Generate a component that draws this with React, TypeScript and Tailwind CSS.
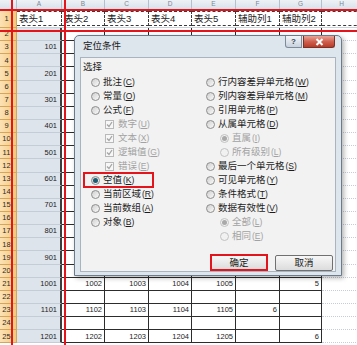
import clsx from 'clsx'

type Col = { key: string; width: string }

type Opt = {
    label: string
    hotkey: string
    kind: 'radio' | 'check'
    sub?: boolean
    checked?: boolean
    disabled?: boolean
}

const COLS: Col[] = [
    { key: 'A', width: 'w-[45px]' },
    { key: 'B', width: 'w-[43px]' },
    { key: 'C', width: 'w-[44px]' },
    { key: 'D', width: 'w-[43px]' },
    { key: 'E', width: 'w-[44px]' },
    { key: 'F', width: 'w-[44px]' },
    { key: 'G', width: 'w-[42px]' },
    { key: 'H', width: 'w-[40px]' },
]

const HEADINGS = ['表头1', '表头2', '表头3', '表头4', '表头5', '辅助列1', '辅助列2', '']

const ROWS = Array.from({ length: 24 }, (_, i) => i + 2)

const LEFT: Opt[] = [
    { label: '批注', hotkey: 'C', kind: 'radio' },
    { label: '常量', hotkey: 'O', kind: 'radio' },
    { label: '公式', hotkey: 'F', kind: 'radio' },
    { label: '数字', hotkey: 'U', kind: 'check', sub: true, checked: true, disabled: true },
    { label: '文本', hotkey: 'X', kind: 'check', sub: true, checked: true, disabled: true },
    { label: '逻辑值', hotkey: 'G', kind: 'check', sub: true, checked: true, disabled: true },
    { label: '错误', hotkey: 'E', kind: 'check', sub: true, checked: true, disabled: true },
    { label: '空值', hotkey: 'K', kind: 'radio', checked: true },
    { label: '当前区域', hotkey: 'R', kind: 'radio' },
    { label: '当前数组', hotkey: 'A', kind: 'radio' },
    { label: '对象', hotkey: 'B', kind: 'radio' },
]

const RIGHT: Opt[] = [
    { label: '行内容差异单元格', hotkey: 'W', kind: 'radio' },
    { label: '列内容差异单元格', hotkey: 'M', kind: 'radio' },
    { label: '引用单元格', hotkey: 'P', kind: 'radio' },
    { label: '从属单元格', hotkey: 'D', kind: 'radio' },
    { label: '直属', hotkey: 'I', kind: 'radio', sub: true, checked: true, disabled: true },
    { label: '所有级别', hotkey: 'L', kind: 'radio', sub: true, disabled: true },
    { label: '最后一个单元格', hotkey: 'S', kind: 'radio' },
    { label: '可见单元格', hotkey: 'Y', kind: 'radio' },
    { label: '条件格式', hotkey: 'T', kind: 'radio' },
    { label: '数据有效性', hotkey: 'V', kind: 'radio' },
    { label: '全部', hotkey: 'L', kind: 'radio', sub: true, checked: true, disabled: true },
    { label: '相同', hotkey: 'E', kind: 'radio', sub: true, disabled: true },
]

// column A counts 101, 201 ... on odd rows; B..G only show below the dialog
function cellValue(row: number, col: number): string {
    if (row % 2 === 0) return ''
    const base = ((row - 1) / 2) * 100
    if (col === 0) return String(base + 1)
    if (row < 21) return ''
    if (col <= 4) return String(base + col + 1)
    if (col === 5) return row === 23 ? '6' : ''
    if (col === 6) return row === 21 ? '5' : row === 25 ? '6' : ''
    return ''
}

function RowHead({ n, tall }: { n: number; tall?: boolean }) {
    return (
        <div
            className={clsx(
                'flex w-[17px] shrink-0 items-center justify-center border-b border-r border-[#d6a55c] bg-linear-to-r from-[#fbe2b6] to-[#f6c979] pr-[3px] text-[7.5px] leading-none text-[#2b2b2b]',
                tall ? 'h-[18px]' : 'h-full'
            )}
        >
            {n}
        </div>
    )
}

function Radio({ checked, disabled }: { checked?: boolean; disabled?: boolean }) {
    return (
        <span
            className={clsx(
                'flex h-[9px] w-[9px] shrink-0 items-center justify-center rounded-full border',
                disabled
                    ? 'border-[#c2c2c2] bg-[#f1f1f1]'
                    : 'border-[#8d8d8d] bg-linear-to-br from-[#cfcfcf] to-[#fbfbfb]'
            )}
        >
            {checked ? (
                <span
                    className={clsx(
                        'h-[5px] w-[5px] rounded-full',
                        disabled ? 'bg-[#a9a9a9]' : 'bg-[#1d5d73]'
                    )}
                />
            ) : null}
        </span>
    )
}

function Check() {
    return (
        <span className="flex h-[9px] w-[9px] shrink-0 items-center justify-center border border-[#b9b9b9] bg-[#f7f7f7]">
            <svg width="7" height="7" viewBox="0 0 7 7">
                <polyline points="1,3.5 3,5.5 6,1" fill="none" stroke="#a5a5a5" strokeWidth="1.3" />
            </svg>
        </span>
    )
}

function Option({ opt }: { opt: Opt }) {
    return (
        <div className={clsx('flex h-[14px] items-center', opt.sub && 'pl-[14px]')}>
            {opt.kind === 'radio' ? (
                <Radio checked={opt.checked} disabled={opt.disabled} />
            ) : (
                <Check />
            )}
            <span
                className={clsx(
                    'whitespace-nowrap text-[9.5px] leading-none',
                    opt.kind === 'check' ? 'ml-[4px]' : 'ml-[3px]',
                    opt.disabled ? 'text-[#a2a2a2]' : 'text-[#1c1c1c]'
                )}
            >
                {opt.label}
                <span className="ml-[1px] text-[8.5px]">
                    (<u>{opt.hotkey}</u>)
                </span>
            </span>
        </div>
    )
}

function Dialog() {
    return (
        <div className="absolute left-[74px] top-[35px] flex h-[241px] w-[268px] flex-col rounded-t-[5px] border border-[#6b7b8c] bg-[#dde5ed] px-[5px] pb-[3px] shadow-[2px_2px_5px_rgba(0,0,0,0.3)]">
            <div className="flex h-[21px] shrink-0 items-start">
                <span className="mt-[5px] pl-[3px] text-[9.5px] leading-none text-[#1a1a1a]">
                    定位条件
                </span>
                <div className="ml-auto mr-[1px] flex gap-[1px]">
                    <div className="flex h-[12px] w-[17px] items-center justify-center rounded-bl-[3px] border border-t-0 border-[#7c8a9a] bg-linear-to-b from-[#f3f6f9] to-[#c8d2dd] text-[8px] font-bold leading-none text-[#34414f]">
                        ?
                    </div>
                    <div className="flex h-[12px] w-[32px] items-center justify-center rounded-br-[3px] border border-t-0 border-[#7a3126] bg-linear-to-b from-[#e9a498] via-[#d0604f] to-[#b93a28]">
                        <svg width="9" height="8" viewBox="0 0 9 8">
                            <path d="M1.5 1 L7.5 7 M7.5 1 L1.5 7" stroke="#ffffff" strokeWidth="2" />
                        </svg>
                    </div>
                </div>
            </div>
            <div className="relative flex flex-1 flex-col border border-[#a9b4c1] bg-[#f2f2f2]">
                <div className="mt-[3px] pl-[2px] text-[9.5px] leading-[11px] text-[#1c1c1c]">
                    选择
                </div>
                <div className="mt-[3px] flex">
                    <div className="flex w-[125px] flex-col pl-[10px]">
                        {LEFT.map((o) => (
                            <Option key={o.label} opt={o} />
                        ))}
                    </div>
                    <div className="flex flex-col">
                        {RIGHT.map((o) => (
                            <Option key={o.label} opt={o} />
                        ))}
                    </div>
                </div>
                <div className="mt-auto flex items-end justify-end gap-[7px] pr-[2px]">
                    <div className="flex h-[17px] w-[58px] items-center justify-center border-2 border-[#e3141c] bg-linear-to-b from-[#f7f7f7] to-[#dcdcdc] text-[9.5px] leading-none text-[#1c1c1c]">
                        确定
                    </div>
                    <div className="flex h-[16px] w-[58px] items-center justify-center rounded-[2px] border border-[#707070] bg-linear-to-b from-[#f7f7f7] to-[#dcdcdc] text-[9.5px] leading-none text-[#1c1c1c]">
                        取消
                    </div>
                </div>
                <div className="absolute left-[2px] top-[114px] h-[16px] w-[71px] border-2 border-[#e3141c]" />
            </div>
        </div>
    )
}

export default function App() {
    return (
        <div className="relative h-[345px] w-[357px] overflow-hidden bg-white font-['Liberation_Sans','Noto_Sans_CJK_SC',sans-serif]">
            <div className="flex h-[10px] border-b border-[#9fb1c6] bg-linear-to-b from-[#eef2f6] to-[#d9e1ea]">
                <div className="w-[17px] shrink-0 border-r border-[#b3c0ce]" />
                {COLS.map((c) => (
                    <div
                        key={c.key}
                        className={clsx(
                            c.width,
                            'flex shrink-0 items-center justify-center border-r border-[#b3c0ce] text-[6.5px] leading-none text-[#7b8797]'
                        )}
                    >
                        {c.key}
                    </div>
                ))}
            </div>

            <div className="flex h-[18px]">
                <RowHead n={1} tall />
                {COLS.map((c, i) => (
                    <div
                        key={c.key}
                        className={clsx(c.width, 'shrink-0 border-b border-[#c9d1db] py-[1px]')}
                    >
                        <div className="flex h-full items-center border-y border-r border-dashed border-[#3a3a3a] pl-[2px] text-[9.5px] leading-none text-[#1c1c1c]">
                            {HEADINGS[i]}
                        </div>
                    </div>
                ))}
            </div>

            {ROWS.map((r) => (
                <div key={r} className="flex h-[13.15px]">
                    <RowHead n={r} />
                    {COLS.map((c, i) => (
                        <div
                            key={c.key}
                            className={clsx(
                                c.width,
                                'flex shrink-0 items-center justify-end text-[7.5px] leading-none text-[#1c1c1c]',
                                i === 0 &&
                                    'border-b border-r-2 border-[#c4ccd6] border-r-[#3d3d3d] bg-[#dee4eb] pr-[3px]',
                                i > 0 && i < 7 && 'border-b border-r border-[#2c2c2c] pr-[2px]',
                                i === 7 && 'border-b border-dotted border-[#c5cdd8]'
                            )}
                        >
                            {cellValue(r, i)}
                        </div>
                    ))}
                </div>
            ))}

            {/* red marker lines over row 1 and column A */}
            <div className="absolute left-0 right-0 top-[8.5px] h-[2px] bg-[#e3141c]" />
            <div className="absolute left-0 right-0 top-[29.5px] h-[2px] bg-[#e3141c]" />
            <div className="absolute bottom-0 left-[11px] top-0 w-[2px] bg-[#e3141c]" />
            <div className="absolute bottom-0 left-[64px] top-0 w-[2px] bg-[#e3141c]" />

            <Dialog />
        </div>
    )
}
